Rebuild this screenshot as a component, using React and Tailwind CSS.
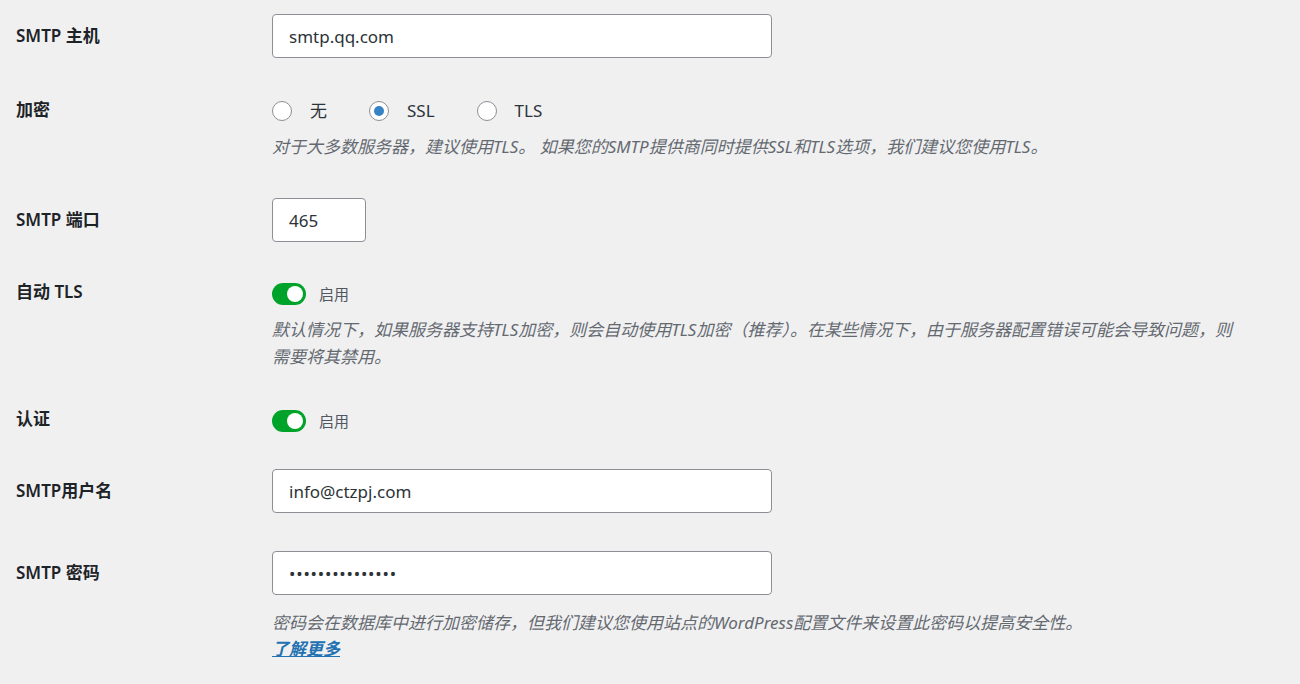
import React from "react";

const Radio = ({ checked, label }) => (
  <label className="flex items-center mr-[42px]">
    <span className="w-[20px] h-[20px] rounded-full border border-[#8c8f94] bg-white flex items-center justify-center">
      {checked && <span className="w-[10px] h-[10px] rounded-full bg-[#3582c4]" />}
    </span>
    <span className="ml-[18px] text-[17px] text-[#2c3338]">{label}</span>
  </label>
);

const Toggle = () => (
  <div className="flex items-center h-[22px]">
    <span className="w-[34px] h-[22px] rounded-full bg-[#00a32a] flex items-center justify-end pr-[3px]">
      <span className="w-[16px] h-[16px] rounded-full bg-white" />
    </span>
    <span className="ml-[13px] text-[15px] text-[#50575e]">启用</span>
  </div>
);

const App = () => {
  return (
    <div className="min-h-screen bg-[#f0f0f1] pl-4 pr-[18px] pt-[14px] text-[#1d2327] font-['Segoe_UI','Noto_Sans','Noto_Sans_CJK_SC',sans-serif]">
      {/* SMTP host */}
      <div className="flex">
        <div className="w-[256px] shrink-0 leading-[44px] text-[17px] font-semibold">SMTP 主机</div>
        <input
          readOnly
          defaultValue="smtp.qq.com"
          className="w-[500px] h-[44px] px-4 rounded-[4px] border border-[#8c8f94] bg-white text-[17px] text-[#2c3338] outline-none"
        />
      </div>

      {/* encryption */}
      <div className="flex mt-[41px]">
        <div className="w-[256px] shrink-0 leading-[22px] text-[17px] font-semibold">加密</div>
        <div className="flex-1">
          <div className="flex items-center h-[24px]">
            <Radio label="无" />
            <Radio checked label="SSL" />
            <Radio label="TLS" />
          </div>
          <p className="mt-[11px] leading-[26px] text-[17px] italic text-[#646970]">
            对于大多数服务器，建议使用TLS。 如果您的SMTP提供商同时提供SSL和TLS选项，我们建议您使用TLS。
          </p>
        </div>
      </div>

      {/* port */}
      <div className="flex mt-[38px]">
        <div className="w-[256px] shrink-0 leading-[44px] text-[17px] font-semibold">SMTP 端口</div>
        <input
          readOnly
          defaultValue="465"
          className="w-[94px] h-[44px] px-4 rounded-[4px] border border-[#8c8f94] bg-white text-[17px] text-[#2c3338] outline-none"
        />
      </div>

      {/* auto tls */}
      <div className="flex mt-[41px]">
        <div className="w-[256px] shrink-0 leading-[18px] text-[17px] font-semibold">自动 TLS</div>
        <div className="flex-1">
          <Toggle />
          <p className="mt-[11px] w-[970px] leading-[27px] text-[17px] italic text-[#646970]">
            默认情况下，如果服务器支持TLS加密，则会自动使用TLS加密（推荐）。在某些情况下，由于服务器配置错误可能会导致问题，则需要将其禁用。
          </p>
        </div>
      </div>

      {/* auth */}
      <div className="flex mt-[40px]">
        <div className="w-[256px] shrink-0 leading-[18px] text-[17px] font-semibold">认证</div>
        <Toggle />
      </div>

      {/* username */}
      <div className="flex mt-[37px]">
        <div className="w-[256px] shrink-0 leading-[44px] text-[17px] font-semibold">SMTP用户名</div>
        <input
          readOnly
          defaultValue="info@ctzpj.com"
          className="w-[500px] h-[44px] px-4 rounded-[4px] border border-[#8c8f94] bg-white text-[17px] text-[#2c3338] outline-none"
        />
      </div>

      {/* password */}
      <div className="flex mt-[38px]">
        <div className="w-[256px] shrink-0 leading-[44px] text-[17px] font-semibold">SMTP 密码</div>
        <div className="flex-1">
          <input
            readOnly
            type="password"
            defaultValue="abcdefghijklmno"
            className="w-[500px] h-[44px] px-4 rounded-[4px] border border-[#8c8f94] bg-white text-[17px] tracking-[0.8px] text-[#2c3338] outline-none"
          />
          <p className="mt-[15px] leading-[26px] text-[17px] italic text-[#646970]">
            密码会在数据库中进行加密储存，但我们建议您使用站点的WordPress配置文件来设置此密码以提高安全性。
          </p>
          <a href="#" className="block leading-[26px] text-[17px] italic font-bold underline text-[#2271b1]">
            了解更多
          </a>
        </div>
      </div>
    </div>
  );
};

export default App;
